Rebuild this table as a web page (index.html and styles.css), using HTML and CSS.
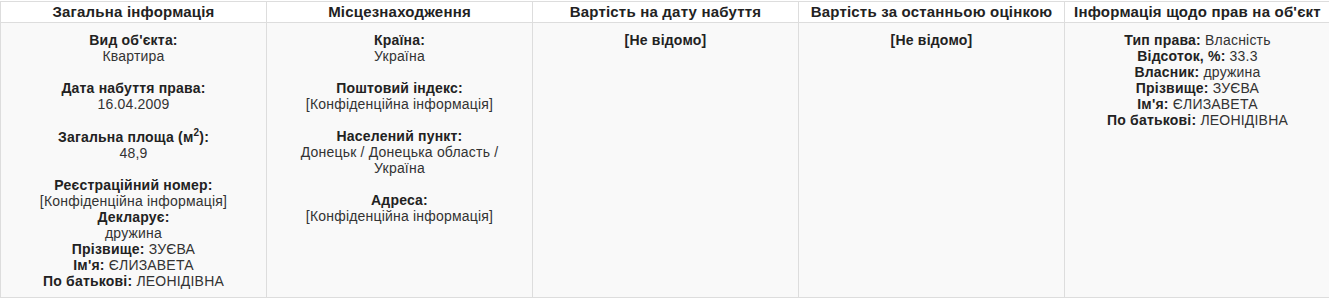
FILE: index.html
```html
<!DOCTYPE html>
<html lang="uk">
<head>
<meta charset="utf-8">
<link rel="stylesheet" href="styles.css">
</head>
<body>
<table class="info">
  <colgroup><col><col><col><col><col></colgroup>
  <thead>
    <tr>
      <th>Загальна інформація</th>
      <th>Місцезнаходження</th>
      <th>Вартість на дату набуття</th>
      <th>Вартість за останньою оцінкою</th>
      <th>Інформація щодо прав на об'єкт</th>
    </tr>
  </thead>
  <tbody>
    <tr>
      <td>
        <b>Вид об'єкта:</b><br>Квартира<br><br>
        <b>Дата набуття права:</b><br>16.04.2009<br><br>
        <b>Загальна площа (м<sup>2</sup>):</b><br>48,9<br><br>
        <b>Реєстраційний номер:</b><br>[Конфіденційна інформація]<br>
        <b>Декларує:</b><br>дружина<br>
        <b>Прізвище:</b> ЗУЄВА<br>
        <b>Ім'я:</b> ЄЛИЗАВЕТА<br>
        <b>По батькові:</b> ЛЕОНІДІВНА
      </td>
      <td>
        <b>Країна:</b><br>Україна<br><br>
        <b>Поштовий індекс:</b><br>[Конфіденційна інформація]<br><br>
        <b>Населений пункт:</b><br>Донецьк / Донецька область /<br>Україна<br><br>
        <b>Адреса:</b><br>[Конфіденційна інформація]
      </td>
      <td><b>[Не відомо]</b></td>
      <td><b>[Не відомо]</b></td>
      <td>
        <b>Тип права:</b> Власність<br>
        <b>Відсоток, %:</b> 33.3<br>
        <b>Власник:</b> дружина<br>
        <b>Прізвище:</b> ЗУЄВА<br>
        <b>Ім'я:</b> ЄЛИЗАВЕТА<br>
        <b>По батькові:</b> ЛЕОНІДІВНА
      </td>
    </tr>
  </tbody>
</table>
</body>
</html>
```
FILE: styles.css
```css
html, body {
  overflow: hidden;
}
body {
  margin: 1px 0 0 0;
  background: #fff;
  font-family: "Liberation Sans", Arial, sans-serif;
  color: #333;
}
.info {
  width: 1331px;
  table-layout: fixed;
  border-collapse: collapse;
}
.info col {
  width: 266px;
}
.info th {
  border: 1px solid #ddd;
  background: #fff;
  color: #222;
  font-size: 15px;
  letter-spacing: 0.2px;
  font-weight: bold;
  line-height: 20px;
  padding: 0 2px;
  text-align: center;
  white-space: nowrap;
}
.info td {
  border: 1px solid #ddd;
  background: #f9f9f9;
  font-size: 14px;
  letter-spacing: 0.2px;
  line-height: 16px;
  padding: 9px 4px 6px;
  text-align: center;
  vertical-align: top;
  color: #333;
  height: 259px;
  box-sizing: content-box;
}
.info td b {
  color: #222;
}
.info sup {
  font-size: 10px;
  line-height: 1;
}
```
